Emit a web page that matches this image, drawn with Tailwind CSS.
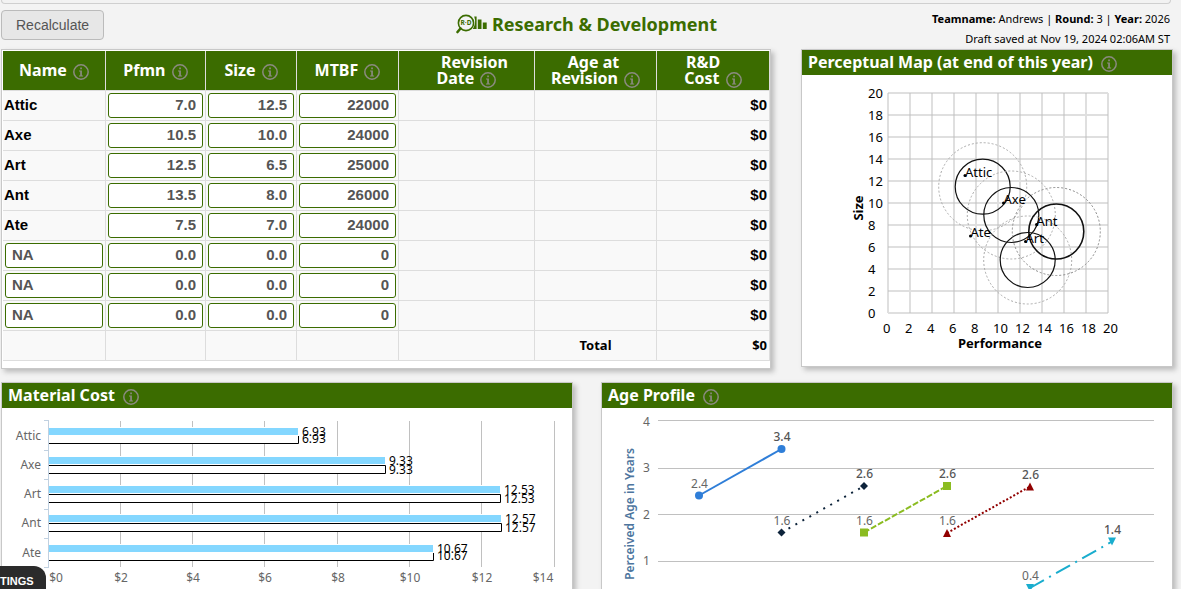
<!DOCTYPE html>
<html lang="en">
<head>
<meta charset="utf-8">
<title>Research &amp; Development</title>
<script src="https://cdn.jsdelivr.net/npm/@tailwindcss/browser@4"></script>
</head>
<body class="h-screen overflow-hidden bg-[#f3f3f3] font-['Noto_Sans',sans-serif] text-black">
<svg class="hidden" aria-hidden="true">
  <symbol id="info" viewBox="0 0 16 16">
    <circle cx="8" cy="8" r="7.2" fill="none" stroke="#8b8b80" stroke-width="1.5"/>
    <path d="M7.2 3.600h1.700v1.600H7.200zM6 6.500h2.900v4.900h1.200v1H6v-1h1.200V7.500H6z" fill="#8b8b80"/>
  </symbol>
</svg>

<div class="mr-2">
  <div class="h-1 mr-0.5 ml-px rounded-b-sm border-b border-x border-[#cfcfcf] bg-[#f2f2f2]"></div>

  <header class="grid h-[45px] grid-cols-[1fr_auto_1fr]">
    <div class="pt-1.5 pl-px">
      <button type="button" class="h-[30px] rounded border border-[#bbb] bg-[#e7e7e7] px-3.5 font-['Liberation_Sans',sans-serif] text-sm text-[#555]">Recalculate</button>
    </div>
    <h1 class="flex items-start gap-1 pt-2 text-lg leading-6 font-bold text-[#3b6c00]">
      <svg class="mt-0.5 h-5 w-8" viewBox="0 0 32 20">
        <circle cx="10" cy="9" r="7.6" fill="none" stroke="#3b6c00" stroke-width="1.6"/>
        <path d="M4.500 14.500 1.500 18" stroke="#3b6c00" stroke-width="2.600" stroke-linecap="round"/>
        <path d="M18.200 2.600h2.400V15h-3.800Q20.600 9 18.200 2.600zM21.800 5.500h3.700V15h-3.700zM26.800 8.500h3.900V15h-3.900z" fill="#3b6c00"/>
        <text x="10" y="11.300" text-anchor="middle" font-size="6.500" font-weight="700" fill="#3b6c00">R·D</text>
      </svg>
      Research &amp; Development
    </h1>
    <div class="pt-[5px] pr-[3px] text-right text-[11px] leading-5">
      <p><b>Teamname:</b> Andrews | <b>Round:</b> 3 | <b>Year:</b> 2026</p>
      <p>Draft saved at Nov 19, 2024 02:06AM ST</p>
    </div>
  </header>

  <div class="grid grid-cols-[770fr_372fr] items-start gap-[30px] pl-px">
    <section class="border border-[#c8c8c8] bg-white pt-px pb-[7px] pl-px shadow-[3px_3px_5px_#bbb]">
      <table class="w-full table-fixed border-separate border-spacing-0">
        <colgroup>
          <col class="w-[103px]"><col class="w-[100px]"><col class="w-[91px]"><col class="w-[102px]"><col class="w-[136px]"><col class="w-[122px]"><col class="w-[113px]">
        </colgroup>
        <thead>
          <tr class="h-10 bg-[#3b6c00] text-base leading-4 font-bold text-white [&>th]:border-r [&>th]:border-b [&>th]:border-[#ddd] [&>th]:p-0 [&>th]:pb-0.5 [&_svg]:-my-1 [&_svg]:ml-0.5 [&_svg]:inline [&_svg]:size-4 [&_svg]:align-baseline">
            <th>Name <svg><use href="#info"/></svg></th>
            <th>Pfmn <svg><use href="#info"/></svg></th>
            <th>Size <svg><use href="#info"/></svg></th>
            <th>MTBF <svg><use href="#info"/></svg></th>
            <th><span class="block pl-4">Revision</span>Date <svg><use href="#info"/></svg></th>
            <th><span class="block pr-1">Age at</span>Revision <svg><use href="#info"/></svg></th>
            <th><span class="block pr-5">R&amp;D</span>Cost <svg><use href="#info"/></svg></th>
          </tr>
        </thead>
        <tbody id="products" class="font-['Liberation_Sans',sans-serif] text-[15px] leading-5 font-bold"></tbody>
      </table>
    </section>

    <section class="border border-[#c8c8c8] bg-white shadow-[3px_3px_5px_#bbb]">
      <h2 class="flex h-[25px] items-start gap-2 bg-[#3b6c00] pl-1.5 text-base leading-6 font-bold text-white">Perceptual Map (at end of this year) <svg class="mt-1.5 size-4"><use href="#info"/></svg></h2>
      <svg id="map" class="block w-full" viewBox="802 75 370 291" font-size="13"></svg>
    </section>
  </div>

  <div class="mt-[13px] grid grid-cols-2 gap-7 pl-px">
    <section class="border border-[#c8c8c8] bg-white shadow-[3px_3px_5px_#bbb]">
      <h2 class="flex h-[25px] items-start gap-2 bg-[#3b6c00] pl-1.5 text-base leading-6 font-bold text-white">Material Cost <svg class="mt-1.5 size-4"><use href="#info"/></svg></h2>
      <svg id="cost" class="block w-full" viewBox="2 408 570 181" font-size="12"></svg>
    </section>
    <section class="border border-[#c8c8c8] bg-white shadow-[3px_3px_5px_#bbb]">
      <h2 class="flex h-[25px] items-start gap-2 bg-[#3b6c00] pl-1.5 text-base leading-6 font-bold text-white">Age Profile <svg class="mt-1.5 size-4"><use href="#info"/></svg></h2>
      <svg id="age" class="block w-full" viewBox="602 408 570 181" font-size="12"></svg>
    </section>
  </div>
</div>

<button type="button" class="fixed bottom-0 left-0 h-[23px] rounded-tr-xl bg-[#2b2b2b] pt-1.5 pr-3 font-['Liberation_Sans',sans-serif] text-[11px] leading-4 font-bold text-white">TINGS</button>

<script>
const rows = [['Attic','7.0','12.5','22000'],['Axe','10.5','10.0','24000'],['Art','12.5','6.5','25000'],['Ant','13.5','8.0','26000'],['Ate','7.5','7.0','24000'],['','0.0','0.0','0'],['','0.0','0.0','0'],['','0.0','0.0','0']];
const td = 'border-r border-b border-[#ddd] bg-[#f9f9f9]';
const input = 'block h-[25px] w-full rounded-[3px] border border-[#3b6c00] bg-white px-1.5 pb-0.5 text-[#555] placeholder:text-[#555] placeholder:opacity-100';
const cols = ['Pfmn', 'Size', 'MTBF'];
document.getElementById('products').innerHTML = rows.map(([name, ...vals], r) =>
  `<tr class="h-[30px]">` + (name ? `<td class="${td} p-0 pl-px pb-0.5">${name}</td>` : `<td class="${td} px-0.5 py-0"><input class="${input}" placeholder="NA" aria-label="Name, row ${r + 1}"></td>`) +
  vals.map((v, i) => `<td class="${td} px-0.5 py-0"><input class="${input} text-right" value="${v}" aria-label="${cols[i]}, row ${r + 1}"></td>`).join('') +
  `<td class="${td}"></td><td class="${td}"></td><td class="${td} p-0 pr-0.5 pb-0.5 text-right">$0</td></tr>`).join('') +
  `<tr class="h-[30px] font-['Noto_Sans',sans-serif] text-[13px]">${`<td class="${td}"></td>`.repeat(5)}<td class="${td} p-0 pb-0.5 text-center">Total</td><td class="${td} p-0 pr-0.5 pb-0.5 text-right">$0</td></tr>`;

// Perceptual map: 11 units per step, origin at (888, 313)
let s = '';
for (let i = 0; i <= 10; i++) {
  const x = 888 + 22 * i, y = 313 - 22 * i;
  s += `<path d="M${x} 93V313M888 ${y}H1108" stroke="#c0c0c0" stroke-opacity=".5" stroke-width="2"/>`;
  s += `<text x="868" y="${y + 5}">${2 * i}</text><text x="${x - 5}" y="333">${2 * i}</text>`;
}
[[982.7,186.7,1.2,'#aaa'],[1011.3,215,1.2,'#aaa'],[1027.7,260,1.2,'#aaa'],[1056.3,231.5,1.6,'#888']].forEach(([x, y, w, c]) =>
  s += `<circle cx="${x}" cy="${y}" r="27.500" fill="none" stroke="#111" stroke-width="${w}"/><circle cx="${x}" cy="${y}" r="44" fill="none" stroke="${c}" stroke-dasharray="2 2"/>`);
[['Attic',965,175.5],['Axe',1003.5,203],['Ant',1036.5,224.5],['Art',1025.5,241.5],['Ate',970.5,236]].forEach(([n, x, y]) =>
  s += `<circle cx="${x}" cy="${y}" r="1.500"/><text x="${x}" y="${y + 1}">${n}</text>`);
s += `<text x="1000" y="348" text-anchor="middle" font-weight="700">Performance</text><text transform="translate(863 208) rotate(-90)" text-anchor="middle" font-weight="700">Size</text>`;
document.getElementById('map').innerHTML = s;

// Material cost bars
s = '';
[120.5,192.5,264.5,337.5,409.5,481.5,554.5].forEach(x => s += `<path d="M${x} 421V567" stroke="#c0c0c0"/>`);
[['Attic',428,298,'6.93',0],['Axe',457,385,'9.33',1],['Art',486,500,'12.53',1],['Ant',515,501,'12.57',1],['Ate',545,433,'10.67',0]].forEach(([n, y, x, v, top]) => {
  s += `<path d="M49 ${y - 1}H${x + 1}V${y + 16}H49z" fill="#fff"/><path d="M49 ${y}H${x}V${y + 7}H49z" fill="#84d7ff"/>`;
  s += `<path d="${top ? `M49 ${y + 8.5}H${x + .5}V${y + 16.5}H49` : `M${x + .5} ${y + 8}V${y + 15.5}H49`}" fill="none" stroke="#000"/>`;
  s += `<text x="${x + 4}" y="${y + 8}">${v}</text><text x="${x + 4}" y="${y + (top ? 17 : 15)}">${v}</text>`;
  s += `<text x="41" y="${y + 12}" text-anchor="end" fill="#666">${n}</text>`;
});
s += '<path d="M48.500 420V568M44 420.500h4M44 450.500h4M44 479.500h4M44 509.500h4M44 538.500h4M44 567.500h4" stroke="#c0d0e0" fill="none"/>';
[56,121,193,265,338,410,482,543].forEach((x, i) => s += `<text x="${x}" y="582" text-anchor="middle" fill="#666">$${2 * i}</text>`);
document.getElementById('cost').innerHTML = s;

// Age profile lines
s = '<path d="M658 420.500H1154M658 468.500H1154M658 514.500H1154M658 561.500H1154" stroke="#c0c0c0"/>';
[426,472,519,565].forEach((y, i) => s += `<text x="643" y="${y}" fill="#666">${4 - i}</text>`);
s += '<text transform="translate(634 514) rotate(-90)" text-anchor="middle" font-weight="600" fill="#4d759e">Perceived Age in Years</text>';
const marks = {
  circle: 'M-4 0a4 4 0 1 0 8 0a4 4 0 1 0-8 0z',
  diamond: 'M0-4 4 0 0 4-4 0z',
  square: 'M-4-4H4V4H-4z',
  up: 'M0-4 4 4H-4z',
  down: 'M0 4 4-4H-4z'
};
[[699,495.5,781.5,449,'#2f7ed8','circle','','2.4','3.4'],
 [781.5,532.5,864,486,'#0d233a','diamond','2 6','1.6','2.6'],
 [864,532.5,947,486,'#8bbc21','square','6 2','1.6','2.6'],
 [947,533,1030,486.5,'#910000','up','2 2','1.6','2.6'],
 [1030,588,1112,541.5,'#1aadce','down','16 6 2 6','0.4','1.4']].forEach(([x1, y1, x2, y2, c, m, dash, a, b]) => {
  s += `<path d="M${x1} ${y1}L${x2} ${y2}" stroke="${c}" stroke-width="2" stroke-dasharray="${dash || 'none'}"/>`;
  s += `<path d="${marks[m]}" fill="${c}" transform="translate(${x1} ${y1})"/><path d="${marks[m]}" fill="${c}" transform="translate(${x2} ${y2})"/>`;
  s += `<text x="${x1 + .5}" y="${y1 - 8}" text-anchor="middle" fill="#666">${a}</text><text x="${x2 + .5}" y="${y2 - 8}" text-anchor="middle" fill="#555" font-weight="500">${b}</text>`;
});
document.getElementById('age').innerHTML = s;
</script>
</body>
</html>
